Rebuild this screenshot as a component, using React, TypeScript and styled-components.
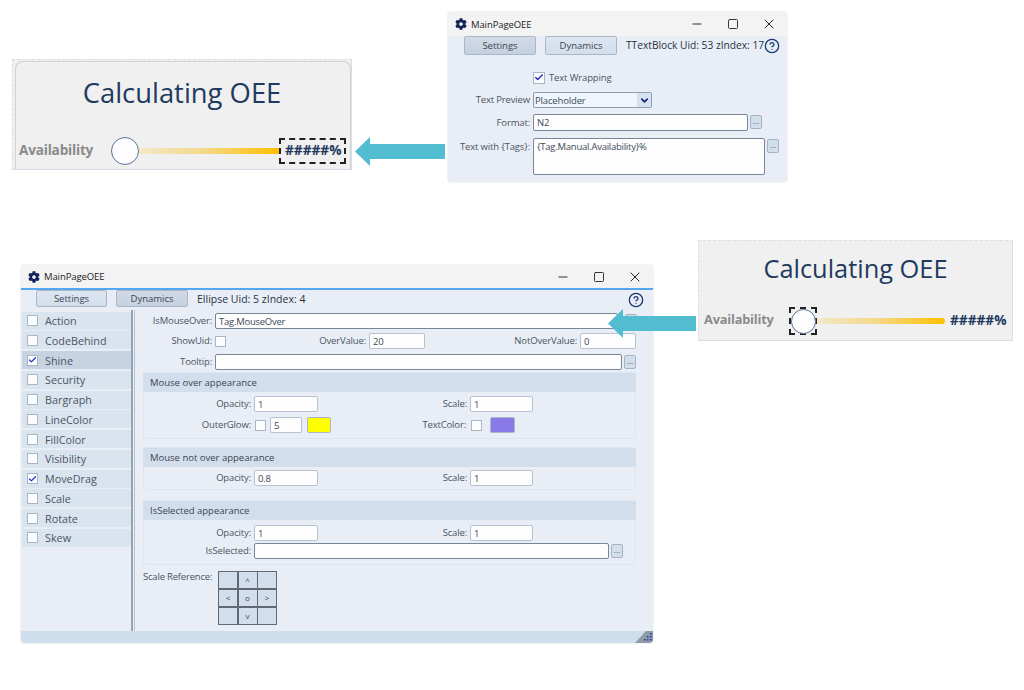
import styled, { createGlobalStyle } from "styled-components";
import { FaCog } from "react-icons/fa";
import { Check, ChevronDown, CircleHelp, Minus, Square, X } from "lucide-react";

const GlobalStyle = createGlobalStyle`
  html, body {
    margin: 0;
    padding: 0;
    background: #fff;
  }
  body {
    font-family: "Open Sans", "Noto Sans", sans-serif;
    font-size: 10px;
    color: #3c4654;
  }
`;

const Page = styled.main`
  position: relative;
  width: 1024px;
  height: 690px;
  overflow: hidden;
  background: #fff;
`;

/* preview cards */
const Card = styled.section<{ $left: number; $top: number; $w: number; $h: number; $pad: number; $framed?: boolean }>`
  position: absolute;
  left: ${(p) => p.$left}px;
  top: ${(p) => p.$top}px;
  width: ${(p) => p.$w}px;
  height: ${(p) => p.$h}px;
  box-sizing: border-box;
  padding-top: ${(p) => p.$pad}px;
  background: #f0f0f0;
  border: 1px dashed #dcdee1;
  border-right: 1px solid ${(p) => (p.$framed ? "#cfe3ee" : "#dcdee1")};
  border-bottom: 1px solid #d5dbe6;

  &::before {
    content: "";
    display: ${(p) => (p.$framed ? "block" : "none")};
    position: absolute;
    inset: 1px 0 0 2px;
    border: 1px solid #d2d2d2;
    border-bottom: none;
    border-radius: 8px 8px 0 0;
  }
`;

const CardTitle = styled.h2<{ $size: number }>`
  margin: 0;
  height: 40px;
  line-height: 40px;
  text-align: center;
  font-family: "Open Sans", sans-serif;
  font-weight: 400;
  font-size: ${(p) => p.$size}px;
  color: #1f3a5f;
`;

const Gauge = styled.div<{ $gap: number; $left: number }>`
  display: flex;
  align-items: center;
  height: 32px;
  margin-top: ${(p) => p.$gap}px;
  padding-left: ${(p) => p.$left}px;
`;

const GaugeLabel = styled.span<{ $w: number; $size: number }>`
  width: ${(p) => p.$w}px;
  padding-bottom: 4px;
  font-family: "Open Sans", sans-serif;
  font-weight: 700;
  font-size: ${(p) => p.$size}px;
  letter-spacing: -0.2px;
  color: #8a8a8a;
`;

const KnobFrame = styled.span<{ $selected?: boolean }>`
  flex: none;
  display: flex;
  align-items: center;
  justify-content: center;
  box-sizing: border-box;
  width: 28px;
  height: 28px;
  border: ${(p) => (p.$selected ? "2px dashed #222" : "none")};
`;

const Knob = styled.span<{ $size: number }>`
  flex: none;
  box-sizing: border-box;
  width: ${(p) => p.$size}px;
  height: ${(p) => p.$size}px;
  background: #fdfdff;
  border: 1.5px solid #5a7398;
  border-radius: 50%;
`;

const Bar = styled.span<{ $w: number; $round?: boolean }>`
  flex: none;
  width: ${(p) => p.$w}px;
  height: 6px;
  background: linear-gradient(to right, #f3e8c8, #f3d98c 45%, #ffc000);
  border-radius: ${(p) => (p.$round ? "3px" : "0")};
`;

const GaugeValue = styled.span<{ $selected?: boolean; $gap: number }>`
  flex: none;
  box-sizing: border-box;
  width: ${(p) => (p.$selected ? "67px" : "auto")};
  margin-left: ${(p) => p.$gap}px;
  padding: 0 0 2px 4px;
  font-family: "Open Sans", sans-serif;
  font-weight: 700;
  font-size: 13.7px;
  line-height: 20px;
  white-space: nowrap;
  color: #1f3a5f;
  border: ${(p) => (p.$selected ? "2px dashed #222" : "none")};
`;

/* editor windows */
const Window = styled.section<{ $left: number; $top: number; $w: number; $h: number }>`
  position: absolute;
  left: ${(p) => p.$left}px;
  top: ${(p) => p.$top}px;
  width: ${(p) => p.$w}px;
  height: ${(p) => p.$h}px;
  display: flex;
  flex-direction: column;
  background: #e9eef6;
  border-radius: 4px;
  box-shadow: 0 0 1.5px rgba(90, 100, 120, 0.4);
  overflow: hidden;
`;

const TitleBar = styled.header<{ $h: number; $accent?: boolean }>`
  flex: none;
  display: flex;
  align-items: center;
  box-sizing: border-box;
  height: ${(p) => p.$h}px;
  padding-left: 7px;
  background: #f3f3f3;
  border-bottom: ${(p) => (p.$accent ? "2px solid #54a7ee" : "none")};
  color: #222;
  font-size: 9.5px;
  letter-spacing: -0.1px;
`;

const AppIcon = styled(FaCog)`
  width: 12px;
  height: 12px;
  margin-right: 4px;
  color: #14235a;
`;

const WindowButtons = styled.div`
  display: flex;
  align-items: center;
  gap: 22.5px;
  margin-left: auto;
  padding-right: 10px;
  color: #222;
`;

const TabBar = styled.div<{ $left: number; $h: number }>`
  flex: none;
  display: flex;
  align-items: flex-start;
  height: ${(p) => p.$h}px;
  padding: 0 9px 0 ${(p) => p.$left}px;
`;

const Tab = styled.button<{ $w: number; $h: number; $dark?: boolean }>`
  flex: none;
  width: ${(p) => p.$w}px;
  height: ${(p) => p.$h}px;
  margin-right: 9px;
  padding: 0;
  background: ${(p) => (p.$dark ? "linear-gradient(#d2dae6, #c5d1e0)" : "linear-gradient(#dde6f1, #d3deeb)")};
  border: 1px solid #a9b7c8;
  border-radius: 2px;
  font: inherit;
  font-size: 9.5px;
  color: #3c4654;
`;

const SelectionInfo = styled.span<{ $size: number }>`
  line-height: 18px;
  font-size: ${(p) => p.$size}px;
  color: #28323e;
  white-space: nowrap;
`;

const HelpIcon = styled(CircleHelp)`
  flex: none;
  width: 16px;
  height: 16px;
  margin: 2px 0 0 auto;
  color: #1c3a72;
`;

/* shared form parts */
const Row = styled.div<{ $top?: number }>`
  display: flex;
  align-items: center;
  margin-top: ${(p) => p.$top ?? 0}px;
`;

const FieldLabel = styled.label<{ $w: number; $alignTop?: boolean }>`
  flex: none;
  align-self: ${(p) => (p.$alignTop ? "flex-start" : "auto")};
  box-sizing: border-box;
  width: ${(p) => p.$w}px;
  padding-right: 3px;
  padding-top: ${(p) => (p.$alignTop ? "2px" : "0")};
  text-align: right;
  line-height: 14px;
  white-space: nowrap;
  font-size: 9.5px;
  letter-spacing: -0.15px;
  color: #4a5563;
`;

const TextBox = styled.div<{ $w: number; $h?: number; $strong?: boolean; $left?: number }>`
  flex: none;
  box-sizing: border-box;
  width: ${(p) => p.$w}px;
  height: ${(p) => p.$h ?? 16}px;
  margin-left: ${(p) => p.$left ?? 0}px;
  padding: 1px 3px;
  background: #fdfdfe;
  border: 1px solid ${(p) => (p.$strong ? "#77879a" : "#b6c2d1")};
  border-radius: 2px;
  line-height: 13px;
  font-size: 9.5px;
  letter-spacing: -0.25px;
  color: #414b58;
`;

const MoreButton = styled.button<{ $gap?: number }>`
  flex: none;
  align-self: flex-start;
  width: 12px;
  height: 14px;
  margin-left: ${(p) => p.$gap ?? 2}px;
  margin-top: 1px;
  padding: 0;
  background: #d3deeb;
  border: 1px solid #a4b2c3;
  border-radius: 2px;
  font-size: 8px;
  line-height: 10px;
  color: #3c4654;
`;

const Tick = styled.span<{ $size?: number; $left?: number }>`
  flex: none;
  display: flex;
  align-items: center;
  justify-content: center;
  box-sizing: border-box;
  width: ${(p) => p.$size ?? 11}px;
  height: ${(p) => p.$size ?? 11}px;
  margin-left: ${(p) => p.$left ?? 0}px;
  background: #fbfcfe;
  border: 1px solid #aab6c5;
  color: #2a34c8;
`;

const Swatch = styled.span<{ $color: string; $left: number; $w: number }>`
  flex: none;
  box-sizing: border-box;
  width: ${(p) => p.$w}px;
  height: 16px;
  margin-left: ${(p) => p.$left}px;
  background: ${(p) => p.$color};
  border: 1px solid #aab6c5;
  border-radius: 2px;
`;

/* small window form */
const SmallForm = styled.div`
  display: flex;
  flex-direction: column;
  padding-top: 17px;
`;

const WrapLabel = styled.span`
  margin-left: 4px;
  font-size: 9.5px;
  letter-spacing: -0.15px;
  color: #4a5563;
`;

const Select = styled.div`
  display: flex;
  align-items: center;
  justify-content: space-between;
  box-sizing: border-box;
  width: 119px;
  height: 16px;
  padding-left: 1px;
  background: #f0f6fe;
  border: 1px solid #8b9bb0;
  border-radius: 2px;
  font-size: 9.5px;
  letter-spacing: -0.15px;
  color: #414b58;
`;

const SelectArrow = styled.span`
  display: flex;
  align-items: center;
  justify-content: center;
  width: 14px;
  height: 14px;
  background: #d7e2ef;
  color: #12247a;
`;

/* big window body */
const Body = styled.div`
  flex: 1;
  display: flex;
  min-height: 0;
`;

const Sidebar = styled.nav`
  flex: none;
  display: flex;
  flex-direction: column;
  gap: 1.75px;
  box-sizing: border-box;
  width: 110px;
  padding: 4.5px 0 0 1px;
`;

const SideItem = styled.div<{ $active?: boolean }>`
  display: flex;
  align-items: center;
  gap: 7px;
  height: 18px;
  padding-left: 5px;
  background: ${(p) => (p.$active ? "#c6d3e1" : "#dae4ef")};
  font-size: 10.8px;
  color: #4a5563;
`;

const Splitter = styled.div`
  flex: none;
  box-sizing: border-box;
  width: 4px;
  margin-top: 3px;
  border-left: 2px solid #96a3b2;
  border-right: 1px solid #b9c5d3;
`;

const Content = styled.div`
  flex: 1;
  box-sizing: border-box;
  padding: 6px 0 0 8px;
`;

const Group = styled.section<{ $top: number; $pad: number }>`
  box-sizing: border-box;
  width: 493px;
  margin-top: ${(p) => p.$top}px;
  padding-bottom: ${(p) => p.$pad}px;
  border: 1px solid #dce5f0;
  border-radius: 3px;
`;

const GroupHeader = styled.h3<{ $gap: number }>`
  display: flex;
  align-items: center;
  height: 19px;
  margin: 0 -1px ${(p) => p.$gap}px;
  padding-left: 7px;
  background: #d2deeb;
  font-weight: 400;
  font-size: 9.5px;
  color: #3c4654;
`;

const ReferenceRow = styled.div`
  display: flex;
  align-items: flex-start;
  margin-top: 6px;
`;

const ReferenceLabel = styled.span`
  width: 75px;
  line-height: 12px;
  font-size: 9.5px;
  letter-spacing: -0.2px;
  color: #4a5563;
`;

const ReferenceGrid = styled.div`
  display: grid;
  grid-template-columns: repeat(3, 1fr);
  grid-auto-rows: 1fr;
  gap: 1.5px;
  width: 59px;
  height: 54px;
  padding: 1px;
  box-sizing: border-box;
  background: #5f6873;
`;

const ReferenceCell = styled.span`
  display: flex;
  align-items: center;
  justify-content: center;
  background: #d2deeb;
  font-size: 8px;
  color: #3c4654;
`;

const StatusBar = styled.footer`
  flex: none;
  display: flex;
  justify-content: flex-end;
  height: 12px;
  background: #cfdeed;
`;

/* callout arrows */
const Arrow = styled.svg<{ $left: number; $top: number }>`
  position: absolute;
  left: ${(p) => p.$left}px;
  top: ${(p) => p.$top}px;
  z-index: 2;
`;

const sideItems = [
  { name: "Action" },
  { name: "CodeBehind" },
  { name: "Shine", checked: true, active: true },
  { name: "Security" },
  { name: "Bargraph" },
  { name: "LineColor" },
  { name: "FillColor" },
  { name: "Visibility" },
  { name: "MoveDrag", checked: true },
  { name: "Scale" },
  { name: "Rotate" },
  { name: "Skew" },
];

const referenceCells = ["", "^", "", "<", "o", ">", "", "v", ""];

const CalloutArrow = ({ left, top, width, head }: { left: number; top: number; width: number; head: number }) => (
  <Arrow $left={left} $top={top} width={width} height={head} viewBox={`0 0 ${width} ${head}`}>
    <polygon
      fill="#52bcd0"
      points={`0,${head / 2} 15,0 15,${head / 2 - 7.5} ${width},${head / 2 - 7.5} ${width},${head / 2 + 7.5} 15,${
        head / 2 + 7.5
      } 15,${head}`}
    />
  </Arrow>
);

const Controls = () => (
  <WindowButtons>
    <Minus size={14} strokeWidth={1.6} />
    <Square size={12} strokeWidth={1.8} />
    <X size={16} strokeWidth={1.5} />
  </WindowButtons>
);

const Ticked = ({ size = 11 }: { size?: number }) => (
  <Tick $size={size}>
    <Check size={size - 1} strokeWidth={3.5} />
  </Tick>
);

const App = () => {
  return (
    <Page>
      <GlobalStyle />

      <Card $left={12} $top={59} $w={340} $h={111} $pad={13} $framed>
        <CardTitle $size={27.4}>Calculating OEE</CardTitle>
        <Gauge $gap={22} $left={6}>
          <GaugeLabel $w={92} $size={13.6}>
            Availability
          </GaugeLabel>
          <KnobFrame>
            <Knob $size={28} />
          </KnobFrame>
          <Bar $w={140} />
          <GaugeValue $selected $gap={0}>
            #####%
          </GaugeValue>
        </Gauge>
      </Card>

      <CalloutArrow left={355} top={137} width={90} head={29} />

      <Window $left={448} $top={12} $w={339} $h={170}>
        <TitleBar $h={24}>
          <AppIcon />
          MainPageOEE
          <Controls />
        </TitleBar>
        <TabBar $left={16} $h={18}>
          <Tab $w={72} $h={19} $dark>
            Settings
          </Tab>
          <Tab $w={72} $h={19}>
            Dynamics
          </Tab>
          <SelectionInfo $size={10.2}>TTextBlock Uid: 53 zIndex: 17</SelectionInfo>
          <HelpIcon />
        </TabBar>
        <SmallForm>
          <Row>
            <FieldLabel $w={85} />
            <Ticked size={12} />
            <WrapLabel>Text Wrapping</WrapLabel>
          </Row>
          <Row $top={8}>
            <FieldLabel $w={85}>Text Preview</FieldLabel>
            <Select>
              Placeholder
              <SelectArrow>
                <ChevronDown size={11} strokeWidth={3.5} />
              </SelectArrow>
            </Select>
          </Row>
          <Row $top={6}>
            <FieldLabel $w={85}>Format:</FieldLabel>
            <TextBox $w={215} $h={17} $strong>
              N2
            </TextBox>
            <MoreButton>...</MoreButton>
          </Row>
          <Row $top={7}>
            <FieldLabel $w={85} $alignTop>
              Text with {"{Tags}"}:
            </FieldLabel>
            <TextBox $w={232} $h={37} $strong>
              {"{Tag.Manual.Availability}%"}
            </TextBox>
            <MoreButton>...</MoreButton>
          </Row>
        </SmallForm>
      </Window>

      <Window $left={21} $top={265} $w={632} $h={378}>
        <TitleBar $h={25} $accent>
          <AppIcon />
          MainPageOEE
          <Controls />
        </TitleBar>
        <TabBar $left={15} $h={17}>
          <Tab $w={71} $h={17}>
            Settings
          </Tab>
          <Tab $w={72} $h={17} $dark>
            Dynamics
          </Tab>
          <SelectionInfo $size={10.5}>Ellipse Uid: 5 zIndex: 4</SelectionInfo>
          <HelpIcon />
        </TabBar>
        <Body>
          <Sidebar>
            {sideItems.map((item) => (
              <SideItem key={item.name} $active={item.active}>
                {item.checked ? <Ticked /> : <Tick />}
                {item.name}
              </SideItem>
            ))}
          </Sidebar>
          <Splitter />
          <Content>
            <Row>
              <FieldLabel $w={72}>IsMouseOver:</FieldLabel>
              <TextBox $w={403} $strong>
                Tag.MouseOver
              </TextBox>
              <MoreButton $gap={7}>...</MoreButton>
            </Row>
            <Row $top={4}>
              <FieldLabel $w={72}>ShowUid:</FieldLabel>
              <Tick />
              <FieldLabel $w={143}>OverValue:</FieldLabel>
              <TextBox $w={56}>20</TextBox>
              <FieldLabel $w={155}>NotOverValue:</FieldLabel>
              <TextBox $w={56}>0</TextBox>
            </Row>
            <Row $top={5}>
              <FieldLabel $w={72}>Tooltip:</FieldLabel>
              <TextBox $w={407} $strong />
              <MoreButton>...</MoreButton>
            </Row>

            <Group $top={2} $pad={5}>
              <GroupHeader $gap={4}>Mouse over appearance</GroupHeader>
              <Row>
                <FieldLabel $w={110}>Opacity:</FieldLabel>
                <TextBox $w={64}>1</TextBox>
                <FieldLabel $w={152}>Scale:</FieldLabel>
                <TextBox $w={63}>1</TextBox>
              </Row>
              <Row $top={5}>
                <FieldLabel $w={110}>OuterGlow:</FieldLabel>
                <Tick $left={1} />
                <TextBox $w={32} $left={4}>
                  5
                </TextBox>
                <Swatch $color="#ffff00" $left={5} $w={24} />
                <FieldLabel $w={138}>TextColor:</FieldLabel>
                <Tick $left={2} />
                <Swatch $color="#8a7ae8" $left={8} $w={25} />
              </Row>
            </Group>

            <Group $top={8} $pad={3}>
              <GroupHeader $gap={3}>Mouse not over appearance</GroupHeader>
              <Row>
                <FieldLabel $w={110}>Opacity:</FieldLabel>
                <TextBox $w={64}>0.8</TextBox>
                <FieldLabel $w={152}>Scale:</FieldLabel>
                <TextBox $w={63}>1</TextBox>
              </Row>
            </Group>

            <Group $top={10} $pad={5}>
              <GroupHeader $gap={5}>IsSelected appearance</GroupHeader>
              <Row>
                <FieldLabel $w={110}>Opacity:</FieldLabel>
                <TextBox $w={64}>1</TextBox>
                <FieldLabel $w={152}>Scale:</FieldLabel>
                <TextBox $w={63}>1</TextBox>
              </Row>
              <Row $top={2}>
                <FieldLabel $w={110}>IsSelected:</FieldLabel>
                <TextBox $w={355} $strong />
                <MoreButton>...</MoreButton>
              </Row>
            </Group>

            <ReferenceRow>
              <ReferenceLabel>Scale Reference:</ReferenceLabel>
              <ReferenceGrid>
                {referenceCells.map((cell, i) => (
                  <ReferenceCell key={i}>{cell}</ReferenceCell>
                ))}
              </ReferenceGrid>
            </ReferenceRow>
          </Content>
        </Body>
        <StatusBar>
          <svg width="18" height="12" viewBox="0 0 18 12">
            <polygon points="0,12 11,0 18,0 18,12" fill="#8f9aa8" />
            <g fill="#1f35a8">
              <rect x="15" y="2" width="1.5" height="1.5" />
              <rect x="12" y="5" width="1.5" height="1.5" />
              <rect x="15" y="5" width="1.5" height="1.5" />
              <rect x="9" y="8" width="1.5" height="1.5" />
              <rect x="12" y="8" width="1.5" height="1.5" />
              <rect x="15" y="8" width="1.5" height="1.5" />
            </g>
          </svg>
        </StatusBar>
      </Window>

      <CalloutArrow left={608} top={309} width={88} head={29} />

      <Card $left={698} $top={240} $w={315} $h={101} $pad={7}>
        <CardTitle $size={25.4}>Calculating OEE</CardTitle>
        <Gauge $gap={17} $left={5}>
          <GaugeLabel $w={85} $size={12.8}>
            Availability
          </GaugeLabel>
          <KnobFrame $selected>
            <Knob $size={25} />
          </KnobFrame>
          <Bar $w={128} $round />
          <GaugeValue $gap={1}>#####%</GaugeValue>
        </Gauge>
      </Card>
    </Page>
  );
};

export default App;
